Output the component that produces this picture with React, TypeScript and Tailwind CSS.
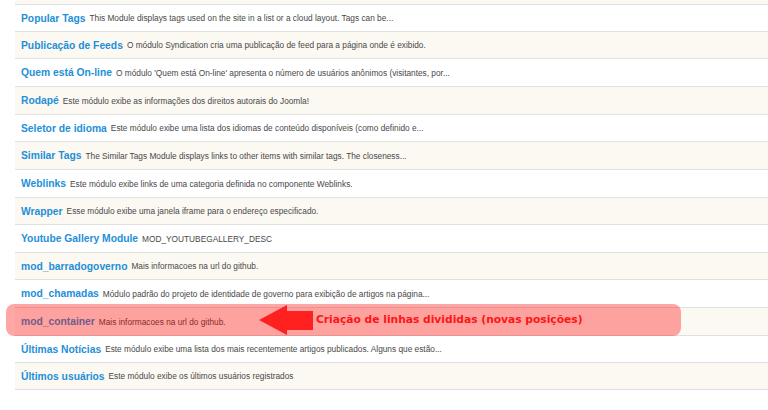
import React from "react";

type Row = { t: string; d: string; h: string };

const rows: Row[] = [
  { t: "Popular Tags", d: "This Module displays tags used on the site in a list or a cloud layout. Tags can be...", h: "h-[27px]" },
  { t: "Publicação de Feeds", d: "O módulo Syndication cria uma publicação de feed para a página onde é exibido.", h: "h-[27px]" },
  { t: "Quem está On-line", d: "O módulo 'Quem está On-line' apresenta o número de usuários anônimos (visitantes, por...", h: "h-[28px]" },
  { t: "Rodapé", d: "Este módulo exibe as informações dos direitos autorais do Joomla!", h: "h-[28px]" },
  { t: "Seletor de idioma", d: "Este módulo exibe uma lista dos idiomas de conteúdo disponíveis (como definido e...", h: "h-[27px]" },
  { t: "Similar Tags", d: "The Similar Tags Module displays links to other items with similar tags. The closeness...", h: "h-[28px]" },
  { t: "Weblinks", d: "Este módulo exibe links de uma categoria definida no componente Weblinks.", h: "h-[28px]" },
  { t: "Wrapper", d: "Esse módulo exibe uma janela iframe para o endereço especificado.", h: "h-[27px]" },
  { t: "Youtube Gallery Module", d: "MOD_YOUTUBEGALLERY_DESC", h: "h-[28px]" },
  { t: "mod_barradogoverno", d: "Mais informacoes na url do github.", h: "h-[27px]" },
  { t: "mod_chamadas", d: "Módulo padrão do projeto de identidade de governo para exibição de artigos na página...", h: "h-[28px]" },
  { t: "mod_container", d: "Mais informacoes na url do github.", h: "h-[28px]" },
  { t: "Últimas Notícias", d: "Este módulo exibe uma lista dos mais recentemente artigos publicados. Alguns que estão...", h: "h-[27px]" },
  { t: "Últimos usuários", d: "Este módulo exibe os últimos usuários registrados", h: "h-[28px]" },
];

export default function App() {
  return (
    <div className="relative w-[768px] h-[410px] overflow-hidden bg-white" style={{ fontFamily: '"Liberation Sans", Arial, sans-serif' }}>
      <div className="ml-[15px]">
        <div className="h-[4px] bg-[#fcf9f3]" />
        {rows.map((r, i) => (
          <div
            key={i}
            className={`${r.h} flex items-center pl-[6px] pt-[1px] border-t border-[#dfe1e1] ${i % 2 === 1 ? "bg-[#fcf9f3]" : "bg-white"} ${i === rows.length - 1 ? "border-b" : ""}`}
          >
            <span className="text-[10.3px] font-bold text-[#1e8fd8] whitespace-nowrap">{r.t}</span>
            <span className="ml-[4px] text-[8.3px] text-[#484848] whitespace-nowrap">{r.d}</span>
          </div>
        ))}
      </div>

      <div className="absolute left-[6px] top-[304px] w-[675px] h-[32px] rounded-[8px] bg-[rgba(255,0,0,0.35)]" />
      <svg className="absolute left-[258px] top-[303px]" width="58" height="34" viewBox="0 0 58 34">
        <polygon points="1,17 29,2 29,8 55,8 55,27 29,27 29,32" fill="#ff2020" />
      </svg>
      <div
        className="absolute left-[316px] top-[312px] text-[10.7px] font-bold text-[#ff1515] whitespace-nowrap leading-[16px]"
        style={{ fontFamily: '"DejaVu Sans", sans-serif' }}
      >
        Criação de linhas divididas (novas posições)
      </div>
    </div>
  );
}
